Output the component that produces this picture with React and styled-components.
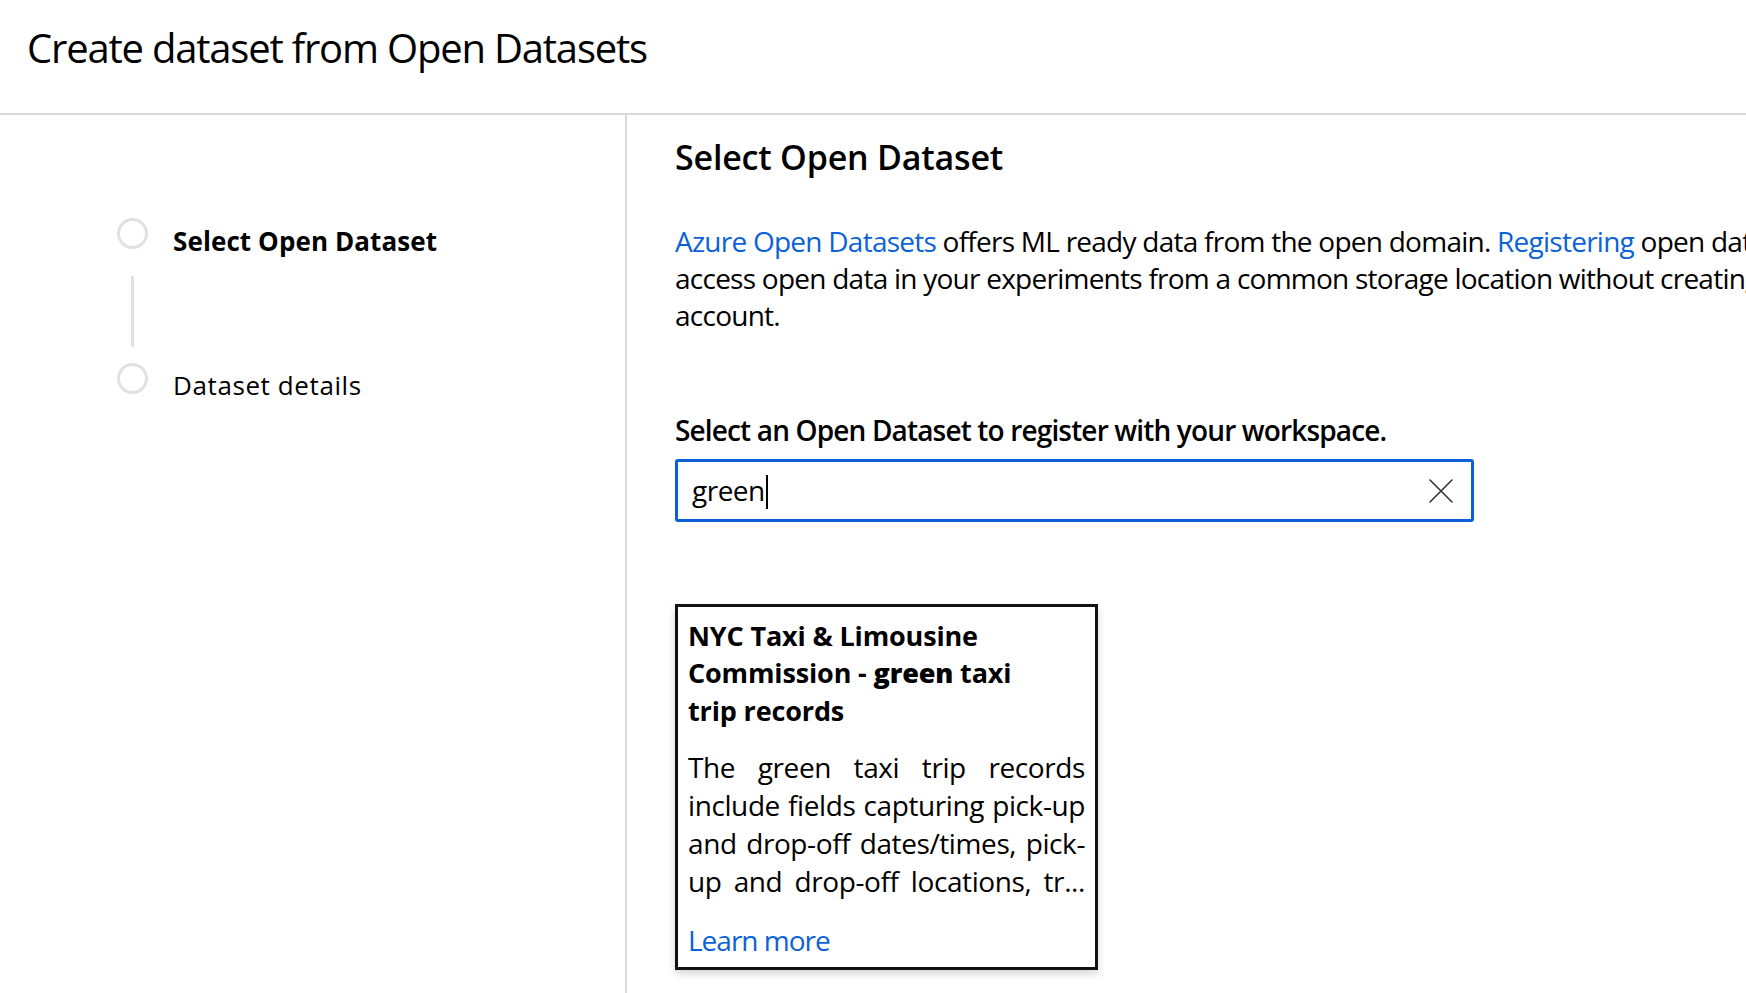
import React from "react";
import styled, { createGlobalStyle } from "styled-components";

const GlobalStyle = createGlobalStyle`
  html, body {
    margin: 0;
    padding: 0;
    background: #ffffff;
    overflow: hidden;
  }
  body {
    font-family: "Open Sans", "Noto Sans", "Liberation Sans", sans-serif;
    color: #000;
  }
  * { box-sizing: border-box; }
`;

const Page = styled.div`
  width: 1746px;
  height: 993px;
  display: flex;
  flex-direction: column;
  overflow: hidden;
`;

const Header = styled.header`
  height: 115px;
  flex: none;
  padding: 24px 0 0 27px;
  border-bottom: 2px solid #d9d9d9;
`;

const Title = styled.h1`
  margin: 0;
  font-size: 40px;
  line-height: 48px;
  font-weight: 400;
  letter-spacing: -1.2px;
`;

const Body = styled.div`
  flex: 1;
  display: flex;
  min-height: 0;
`;

const Sidebar = styled.nav`
  width: 627px;
  flex: none;
  border-right: 2px solid #d9d9d9;
  padding: 103px 0 0 117px;
`;

const Step = styled.div`
  display: flex;
  align-items: flex-start;
  gap: 25px;
`;

const StepCircle = styled.span`
  width: 31px;
  height: 31px;
  flex: none;
  border-radius: 50%;
  border: 3px solid #e1e1e1;
`;

const StepLabel = styled.span`
  margin-top: ${(p) => p.$offset}px;
  font-size: 26px;
  line-height: 34px;
  font-weight: ${(p) => (p.$active ? 700 : 400)};
  letter-spacing: ${(p) => (p.$active ? "0.1px" : "0.6px")};
  white-space: nowrap;
`;

const StepConnector = styled.div`
  width: 3px;
  height: 71px;
  margin: 18px 0 16px 14px;
  background: #e1e1e1;
  border-radius: 1px;
`;

const Content = styled.main`
  flex: 1;
  padding: 20px 0 0 48px;
  min-width: 0;
`;

const SectionTitle = styled.h2`
  margin: 0;
  font-size: 34px;
  line-height: 44px;
  font-weight: 600;
  letter-spacing: -0.2px;
`;

const Intro = styled.p`
  margin: 44px 0 0;
  font-size: 28px;
  line-height: 37px;
  white-space: nowrap;
  letter-spacing: -0.75px;
`;

const Link = styled.a`
  color: #0b62d8;
  text-decoration: none;
`;

const FieldLabel = styled.label`
  display: block;
  margin-top: 78px;
  font-size: 28px;
  line-height: 37px;
  font-weight: 600;
  letter-spacing: -0.85px;
`;

const SearchBox = styled.div`
  margin-top: 10px;
  width: 799px;
  height: 63px;
  border: 3px solid #0b5fd9;
  border-radius: 3px;
  display: flex;
  align-items: center;
  padding: 0 18px 0 14px;
`;

const SearchText = styled.span`
  flex: 1;
  font-size: 28px;
  line-height: 37px;
  letter-spacing: -0.5px;
`;

const Caret = styled.span`
  display: inline-block;
  width: 2px;
  height: 34px;
  margin-left: 1px;
  background: #000;
  vertical-align: -8px;
`;

const ClearButton = styled.button`
  border: none;
  background: none;
  padding: 0;
  width: 24px;
  height: 24px;
  display: flex;
  align-items: center;
  justify-content: center;
  color: #333;
  cursor: pointer;
`;

const Card = styled.article`
  margin-top: 82px;
  width: 423px;
  height: 366px;
  border: 3px solid #111;
  padding: 10px 10px 0 10px;
  box-shadow: 0 4px 8px rgba(0, 0, 0, 0.16);
  background: #fff;
`;

const CardTitle = styled.h3`
  margin: 0;
  font-size: 27px;
  line-height: 37.4px;
  font-weight: 700;
  letter-spacing: -0.15px;
`;

const Highlight = styled.strong`
  font-weight: 800;
`;

const CardText = styled.div`
  margin-top: 19px;
  font-size: 28px;
  line-height: 38px;
  letter-spacing: -0.4px;
`;

const JustifiedLine = styled.span`
  display: block;
  text-align: justify;
  text-align-last: justify;
`;

const LearnMore = styled(Link)`
  display: inline-block;
  margin-top: 21px;
  font-size: 28px;
  line-height: 38px;
  letter-spacing: -1px;
`;

const descriptionLines = [
  "The green taxi trip records",
  "include fields capturing pick-up",
  "and drop-off dates/times, pick-",
  "up and drop-off locations, tr...",
];

function CloseIcon() {
  return (
    <svg width="24" height="24" viewBox="0 0 24 24" fill="none">
      <path d="M1 1 L23 23 M23 1 L1 23" stroke="#333" strokeWidth="1.6" strokeLinecap="round" />
    </svg>
  );
}

export default function App() {
  return (
    <Page>
      <GlobalStyle />
      <Header>
        <Title>Create dataset from Open Datasets</Title>
      </Header>
      <Body>
        <Sidebar>
          <Step>
            <StepCircle />
            <StepLabel $active $offset={6}>Select Open Dataset</StepLabel>
          </Step>
          <StepConnector />
          <Step>
            <StepCircle />
            <StepLabel $offset={5}>Dataset details</StepLabel>
          </Step>
        </Sidebar>
        <Content>
          <SectionTitle>Select Open Dataset</SectionTitle>
          <Intro>
            <Link href="#">Azure Open Datasets</Link> offers ML ready data from the open domain.{" "}
            <Link href="#">Registering</Link> open datasets allows you to
            <br />
            access open data in your experiments from a common storage location without creating a storage
            <br />
            account.
          </Intro>
          <FieldLabel>Select an Open Dataset to register with your workspace.</FieldLabel>
          <SearchBox>
            <SearchText>
              green
              <Caret />
            </SearchText>
            <ClearButton aria-label="Clear">
              <CloseIcon />
            </ClearButton>
          </SearchBox>
          <Card>
            <CardTitle>
              NYC Taxi &amp; Limousine
              <br />
              Commission - <Highlight>green</Highlight> taxi
              <br />
              trip records
            </CardTitle>
            <CardText>
              {descriptionLines.map((line) => (
                <JustifiedLine key={line}>{line}</JustifiedLine>
              ))}
            </CardText>
            <LearnMore href="#">Learn more</LearnMore>
          </Card>
        </Content>
      </Body>
    </Page>
  );
}
